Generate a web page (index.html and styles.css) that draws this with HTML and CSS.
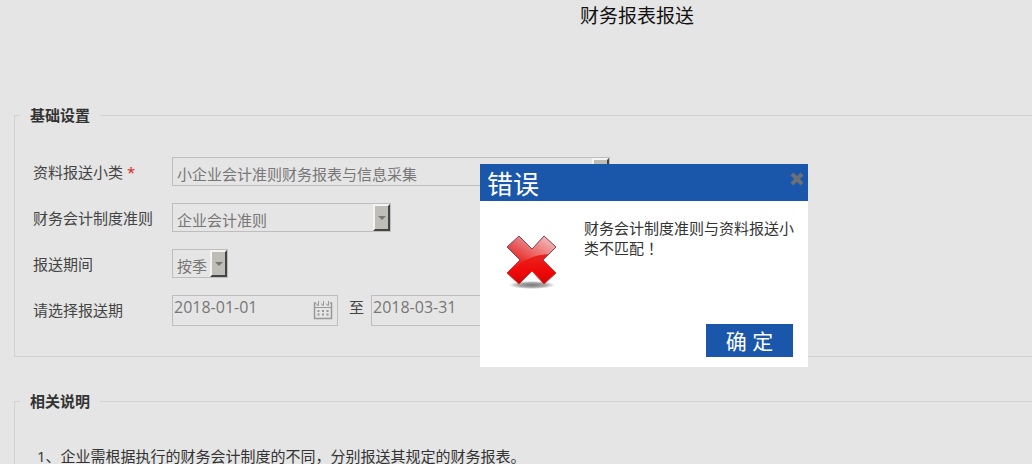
FILE: index.html
```html
<!DOCTYPE html>
<html lang="zh-CN">
<head>
    <meta charset="UTF-8">
    <meta name="viewport" content="width=device-width, initial-scale=1.0">
    <title>财务报表报送</title>
    <link rel="stylesheet" href="styles.css">
</head>
<body>

    <div class="page">
        <h1 class="page-title">财务报表报送</h1>

        <form class="report-form">
            <fieldset class="panel">
                <legend>基础设置</legend>
                <div class="row">
                    <label for="category">资料报送小类 <span class="required">*</span></label>
                    <div class="select-box wide">
                        <select id="category">
                            <option>小企业会计准则财务报表与信息采集</option>
                        </select>
                        <span class="arrow"></span>
                    </div>
                </div>
                <div class="row">
                    <label for="standard">财务会计制度准则</label>
                    <div class="select-box medium">
                        <select id="standard">
                            <option>企业会计准则</option>
                        </select>
                        <span class="arrow"></span>
                    </div>
                </div>
                <div class="row">
                    <label for="period">报送期间</label>
                    <div class="select-box small">
                        <select id="period">
                            <option>按季</option>
                        </select>
                        <span class="arrow"></span>
                    </div>
                </div>
                <div class="row">
                    <label for="dateFrom">请选择报送期</label>
                    <div class="date-box">
                        <input type="text" id="dateFrom" value="2018-01-01">
                        <svg class="calendar" viewBox="0 0 20 20" fill="none" stroke="#999">
                            <path d="M3 3H1.5V18.5H18.5V3H17" stroke-width="1.5"/>
                            <path d="M2 7.5H18"/>
                            <path d="M5.5 1v4.500q-2 0-2-2M10.500 1v4.500q-2 0-2-2M15.500 1v4.500q-2 0-2-2"/>
                            <path d="M4.500 11h2M9 11h2M13.500 11h2M4.500 14.500h2M9 14.500h2M13.500 14.500h2" stroke-width="2"/>
                        </svg>
                    </div>
                    <label class="to" for="dateTo">至</label>
                    <div class="date-box">
                        <input type="text" id="dateTo" value="2018-03-31">
                    </div>
                </div>
            </fieldset>

            <fieldset class="panel">
                <legend>相关说明</legend>
                <p class="note">1、企业需根据执行的财务会计制度的不同，分别报送其规定的财务报表。</p>
            </fieldset>
        </form>
    </div>

    <div class="dialog" role="dialog" aria-labelledby="dialogTitle">
        <div class="dialog-head">
            <h2 id="dialogTitle">错误</h2>
            <button class="close-btn" type="button" aria-label="关闭">
                <svg viewBox="0 0 14 14" stroke="#6b7078" stroke-width="4">
                    <path d="M2 2l10 10M12 2L2 12"/>
                </svg>
            </button>
        </div>
        <div class="dialog-body">
            <svg class="error-icon" viewBox="0 0 50 56">
                <defs>
                    <linearGradient id="red" x1="0" y1="0" x2="0" y2="1">
                        <stop offset="0" stop-color="#d8282c"/>
                        <stop offset="0.45" stop-color="#e8201c"/>
                        <stop offset="0.75" stop-color="#f00808"/>
                        <stop offset="1" stop-color="#c80808"/>
                    </linearGradient>
                    <linearGradient id="shine" x1="0" y1="1" x2="1" y2="0">
                        <stop offset="0.2" stop-color="#fff" stop-opacity="0.05"/>
                        <stop offset="1" stop-color="#fff" stop-opacity="0.8"/>
                    </linearGradient>
                    <radialGradient id="shadow">
                        <stop offset="0" stop-color="#777"/>
                        <stop offset="0.6" stop-color="#aaa"/>
                        <stop offset="1" stop-color="#fff"/>
                    </radialGradient>
                    <clipPath id="cross">
                        <path d="M12 1L25 14 37 1 49 12 36 25 49 38 37 49 25 36 12 49 0 38 13 25 0 12Z"/>
                    </clipPath>
                </defs>
                <ellipse cx="25" cy="50" rx="23" ry="4" fill="url(#shadow)"/>
                <path d="M12 1L25 14 37 1 49 12 36 25 49 38 37 49 25 36 12 49 0 38 13 25 0 12Z" fill="url(#red)"/>
                <path d="M0 0H50V19Q24 18 10 31L0 26Z" fill="url(#shine)" clip-path="url(#cross)"/>
                <path d="M13 25L0 12 12 1 25 14 37 1 49 12 36 25" fill="none" stroke="#7d4658"/>
                <path d="M36 25L49 38 37 49 25 36 12 49 0 38 13 25" fill="none" stroke="#d83030"/>
            </svg>
            <p>财务会计制度准则与资料报送小类不匹配<span class="mark" lang="zh-TW">！</span></p>
        </div>
        <div class="dialog-foot">
            <button class="ok-btn" type="button">确 定</button>
        </div>
    </div>

</body>
</html>
```
FILE: styles.css
```css
* {
    box-sizing: border-box;
}

body {
    margin: 0;
    background-color: #e5e5e5;
    color: #444;
    font-family: "Open Sans", "Noto Sans CJK SC", sans-serif;
    font-size: 15px;
    line-height: 20px;
    overflow: hidden;
}

/* the form runs on past the right edge */
.page {
    margin-right: -242px;
}

.page-title {
    margin: 0;
    padding: 2px 0;
    color: #111;
    font-size: 19px;
    font-weight: normal;
    line-height: 28px;
    text-align: center;
}

.report-form {
    padding-top: 73px;
}

.panel {
    margin: 0 0 34px 14px;
    padding: 32px 5px 30px;
    border: 1px solid #d2d2d2;
}

.panel legend {
    padding: 0 10px;
    color: #333;
    font-weight: bold;
}

.row {
    display: flex;
    padding-left: 13px;
    margin-bottom: 16px;
}

.row:last-child {
    margin-bottom: 0;
}

.row label {
    width: 139px;
    line-height: 30px;
}

.row .to {
    width: 33px;
    line-height: 24px;
    text-align: center;
    padding-left: 4px;
}

.required {
    color: #e02020;
}

.select-box {
    display: flex;
    height: 29px;
    border: 1px solid #bebebe;
}

.wide {
    width: 438px;
}

.medium {
    width: 219px;
}

.small {
    width: 56px;
}

select {
    flex: 1;
    min-width: 0;
    margin: 0;
    padding: 5px 0 0 4px;
    border: 0;
    border-radius: 0;
    background: none;
    color: #777;
    font: inherit;
    appearance: none;
}

.arrow {
    display: flex;
    width: 17px;
    align-items: center;
    justify-content: center;
    border: 2px solid;
    border-color: #f4f4f4 #444 #444 #f4f4f4;
    background-color: #bebdb6;
}

.arrow::before {
    content: "";
    border: 4px solid transparent;
    border-top-color: #777;
    border-bottom: 0;
}

.date-box {
    display: flex;
    width: 166px;
    height: 31px;
    border: 1px solid #bebebe;
}

.date-box input {
    flex: 1;
    min-width: 0;
    padding: 0 0 8px 1px;
    border: 0;
    background: none;
    color: #777;
    font: inherit;
    font-size: 16px;
}

.calendar {
    width: 20px;
    height: 20px;
    margin: 4px 4px 0 0;
}

.note {
    margin: 0;
    padding: 3px 17px;
    color: #333;
}

.mark {
    font-family: "Noto Sans CJK TC", sans-serif;
}

.dialog {
    position: absolute;
    top: 164px;
    left: 480px;
    width: 328px;
    background-color: #fff;
    color: #333;
}

.dialog-head {
    display: flex;
    justify-content: space-between;
    align-items: flex-start;
    height: 37px;
    padding: 0 4px 0 7px;
    background-color: #1a57aa;
}

.dialog-head h2 {
    margin: 0;
    color: #fff;
    font-size: 26px;
    font-weight: normal;
    line-height: 40px;
}

.close-btn {
    width: 14px;
    height: 14px;
    margin-top: 8px;
    padding: 0;
    border: 0;
    background: none;
    cursor: pointer;
}

.close-btn svg {
    display: block;
}

.dialog-body {
    display: flex;
    gap: 27px;
    padding: 17px 13px 0 27px;
}

.dialog-body p {
    flex: 1;
    margin: 0;
}

.error-icon {
    width: 50px;
    height: 56px;
    margin-top: 17px;
}

.dialog-foot {
    display: flex;
    justify-content: flex-end;
    padding: 33px 15px 10px;
}

.ok-btn {
    width: 87px;
    height: 33px;
    padding: 0;
    border: 0;
    background-color: #1a57aa;
    color: #fff;
    font: inherit;
    font-size: 21px;
    cursor: pointer;
}
```
